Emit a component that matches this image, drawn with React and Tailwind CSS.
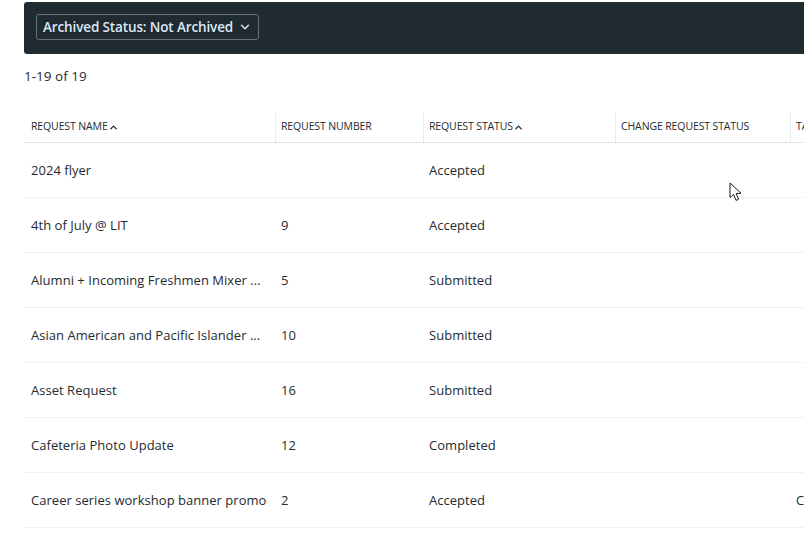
import { ChevronDown, ChevronUp } from "lucide-react";

const rows = [
  { name: "2024 flyer", number: "", status: "Accepted" },
  { name: "4th of July @ LIT", number: "9", status: "Accepted" },
  { name: "Alumni + Incoming Freshmen Mixer ...", number: "5", status: "Submitted" },
  { name: "Asian American and Pacific Islander ...", number: "10", status: "Submitted" },
  { name: "Asset Request", number: "16", status: "Submitted" },
  { name: "Cafeteria Photo Update", number: "12", status: "Completed" },
  { name: "Career series workshop banner promo", number: "2", status: "Accepted", task: "C" },
];

const rowGrid = "grid grid-cols-[251px_148px_192px_175px_28px]";

const HeaderCell = ({ label, sorted, first }) => (
  <div className={`flex items-center h-[30px] overflow-hidden whitespace-nowrap ${first ? "pl-[7px]" : "pl-[5px] border-l border-[#e8ecf0]"}`}>
    <span className="text-[10.5px] tracking-[-0.12px] text-[#252b30]">{label}</span>
    {sorted && <ChevronUp size={11} strokeWidth={3} className="text-[#252b30]" />}
  </div>
);

const Cursor = () => (
  <svg className="absolute left-[729px] top-[182px]" width="14" height="20" viewBox="0 0 14 20">
    <path d="M1 1 L1 15.5 L4.6 12.4 L7 18.4 L9.6 17.3 L7.2 11.6 L12 11.2 Z" fill="#fff" stroke="#1a1a1a" strokeWidth="1" strokeLinejoin="round" />
  </svg>
);

export default function App() {
  return (
    <div className="relative w-[804px] h-[550px] overflow-hidden bg-white pt-[2px] pl-6 font-['Open_Sans','Noto_Sans',sans-serif] text-[#252b30]">
      <div className="flex items-center h-[52px] pl-3 pb-[2px] bg-[#1f2a31] rounded-l-[3px]">
        <button className="flex items-center gap-[5px] h-[26px] w-[223px] pl-[6px] border border-[#65727c] rounded-[3px] text-[13.5px] font-semibold tracking-[-0.13px] whitespace-nowrap text-[#dbe8f5]">
          Archived Status: Not Archived
          <ChevronDown size={14} strokeWidth={2.5} />
        </button>
      </div>

      <div className="h-[58px] pt-[12px] text-[13.5px] leading-[20px]">1-19 of 19</div>

      <div>
        <div className={`${rowGrid} border-b border-[#dde3ea]`}>
          <HeaderCell label="REQUEST NAME" sorted first />
          <HeaderCell label="REQUEST NUMBER" />
          <HeaderCell label="REQUEST STATUS" sorted />
          <HeaderCell label="CHANGE REQUEST STATUS" />
          <HeaderCell label="TA" />
        </div>
        {rows.map((row) => (
          <div key={row.name} className={`${rowGrid} items-center h-[55px] pt-[2px] border-b border-[#eff1f4] text-[13px] tracking-[0.03px] whitespace-nowrap`}>
            <div className="pl-[7px]">{row.name}</div>
            <div className="pl-[6px]">{row.number}</div>
            <div className="pl-[6px]">{row.status}</div>
            <div />
            <div className="pl-[6px]">{row.task}</div>
          </div>
        ))}
      </div>

      <Cursor />
    </div>
  );
}
